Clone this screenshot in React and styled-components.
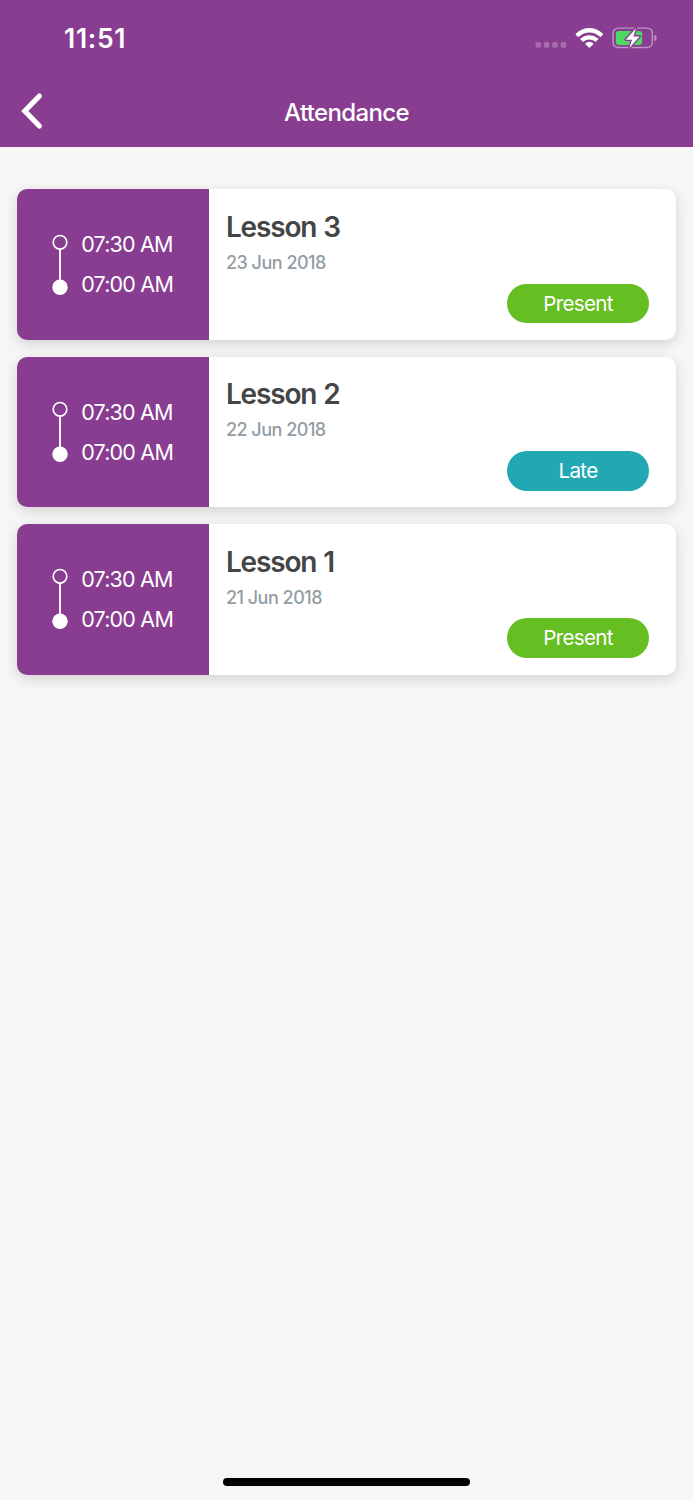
import React from "react";
import styled, { createGlobalStyle } from "styled-components";

const lessons = [
  { id: 3, title: "Lesson 3", date: "23 Jun 2018", start: "07:30 AM", end: "07:00 AM", status: "Present" },
  { id: 2, title: "Lesson 2", date: "22 Jun 2018", start: "07:30 AM", end: "07:00 AM", status: "Late" },
  { id: 1, title: "Lesson 1", date: "21 Jun 2018", start: "07:30 AM", end: "07:00 AM", status: "Present" },
];

const statusColors = {
  Present: "#65be22",
  Late: "#22a8b3",
};

function StatusIcons() {
  return (
    <svg width="124" height="26" viewBox="534 25 124 26" fill="none">
      <g fill="#fff" fillOpacity="0.25">
        <rect x="535.5" y="42" width="5.6" height="5.8" rx="1.8" />
        <rect x="543.8" y="42" width="5.6" height="5.8" rx="1.8" />
        <rect x="552.2" y="42" width="5.6" height="5.8" rx="1.8" />
        <rect x="560.6" y="42" width="5.6" height="5.8" rx="1.8" />
      </g>
      <g fill="#fff">
        <path d="M575.8 33.8 C583.4 26.1 595.3 26.1 602.9 33.8 Q603.3 34.3 602.9 34.7 L600.9 36.8 Q600.4 37.2 599.9 36.8 C593.9 31.1 584.8 31.1 578.8 36.8 Q578.3 37.2 577.8 36.8 L575.8 34.7 Q575.4 34.3 575.8 33.8Z" />
        <path d="M580.6 38.6 C585.4 34 593.3 34 598.1 38.6 Q598.6 39.1 598.1 39.5 L596 41.6 Q595.5 42 595 41.6 C591.9 38.9 586.8 38.9 583.7 41.6 Q583.2 42 582.7 41.6 L580.6 39.5 Q580.1 39.1 580.6 38.6Z" />
        <path d="M585.5 43.4 C587.7 41.5 591 41.5 593.2 43.4 Q593.7 43.8 593.2 44.3 L589.8 47.6 Q589.35 48 588.9 47.6 L585.5 44.3 Q585 43.8 585.5 43.4Z" />
      </g>
      <rect x="613.1" y="28.1" width="39.2" height="19.4" rx="5" stroke="#fff" strokeOpacity="0.45" strokeWidth="1.4" />
      <path d="M654.3 34.6 Q656.7 35.6 656.7 38 Q656.7 40.4 654.3 41.4Z" fill="#fff" fillOpacity="0.45" />
      <rect x="615.9" y="30.9" width="26.2" height="14" rx="2.8" fill="#4cd964" />
      <path
        d="M636 28.2 L625.7 39.7 H632 L629.4 47.9 L639.6 36.4 H633.4Z"
        fill="#fff"
        stroke="#883d90"
        strokeWidth="2.8"
        strokeLinejoin="round"
        paintOrder="stroke"
      />
    </svg>
  );
}

function BackIcon() {
  return (
    <svg width="24" height="38" viewBox="0 0 24 38" fill="none">
      <path d="M19.4 4 L4.8 19 L19.4 34" stroke="#fff" strokeWidth="5.2" strokeLinecap="round" />
    </svg>
  );
}

function Timeline() {
  return (
    <svg width="16" height="62" viewBox="0 0 16 62" fill="none">
      <circle cx="8" cy="8.3" r="6.8" stroke="#fff" strokeWidth="1.7" />
      <path d="M8 15 V46" stroke="#fff" strokeWidth="1.9" />
      <circle cx="8" cy="53.2" r="7.7" fill="#fff" />
    </svg>
  );
}

function LessonCard({ lesson }) {
  return (
    <Card>
      <TimePanel>
        <Timeline />
        <Times>
          <span>{lesson.start}</span>
          <span>{lesson.end}</span>
        </Times>
      </TimePanel>
      <Details>
        <LessonTitle>{lesson.title}</LessonTitle>
        <LessonDate>{lesson.date}</LessonDate>
        <Badge $color={statusColors[lesson.status]}>{lesson.status}</Badge>
      </Details>
    </Card>
  );
}

function App() {
  return (
    <>
      <GlobalStyle />
      <Screen>
        <Header>
          <StatusBar>
            <Clock>11:51</Clock>
            <StatusIcons />
          </StatusBar>
          <NavBar>
            <BackButton aria-label="Back">
              <BackIcon />
            </BackButton>
            <NavTitle>Attendance</NavTitle>
          </NavBar>
        </Header>
        <List>
          {lessons.map((lesson) => (
            <LessonCard key={lesson.id} lesson={lesson} />
          ))}
        </List>
        <HomeIndicator />
      </Screen>
    </>
  );
}

const GlobalStyle = createGlobalStyle`
  * {
    box-sizing: border-box;
  }

  body {
    margin: 0;
    background: #f6f6f6;
    font-family: Inter, "Liberation Sans", sans-serif;
  }
`;

const Screen = styled.div`
  display: flex;
  flex-direction: column;
  width: 693px;
  height: 1500px;
  background: #f6f6f6;
`;

const Header = styled.header`
  height: 147.4px;
  background: #883d90;
  color: #fff;
`;

const StatusBar = styled.div`
  display: flex;
  align-items: center;
  justify-content: space-between;
  height: 76px;
  padding: 0 35px 0 64px;
`;

const Clock = styled.span`
  font-size: 26.5px;
  font-weight: 600;
  line-height: 32px;
  letter-spacing: 0.7px;
`;

const NavBar = styled.div`
  display: grid;
  grid-template-columns: 60px 1fr 60px;
  align-items: center;
  height: 70px;
`;

const BackButton = styled.button`
  display: flex;
  margin: 0 0 0 20px;
  padding: 0;
  border: 0;
  background: none;
`;

const NavTitle = styled.h1`
  margin: 3px 0 0;
  font-size: 24px;
  font-weight: 500;
  line-height: 30px;
  letter-spacing: -0.65px;
  text-align: center;
`;

const List = styled.main`
  display: flex;
  flex: 1;
  flex-direction: column;
  gap: 16.8px;
  padding: 42px 17px 0;
`;

const Card = styled.article`
  display: flex;
  height: 150.6px;
  border-radius: 10px;
  background: #fff;
  box-shadow: 0 4px 13px rgba(0, 0, 0, 0.14);
`;

const TimePanel = styled.div`
  display: flex;
  align-items: center;
  gap: 13px;
  width: 192.3px;
  padding-left: 35.2px;
  border-radius: 10px 0 0 10px;
  background: #883d90;
  color: #fff;
`;

const Times = styled.div`
  display: flex;
  flex-direction: column;
  padding-top: 1.2px;
  font-size: 21.5px;
  line-height: 39.8px;
  letter-spacing: -0.8px;
  white-space: nowrap;
`;

const Details = styled.div`
  display: flex;
  flex: 1;
  flex-direction: column;
  padding: 20.6px 27px 16.8px 16.6px;
`;

const LessonTitle = styled.h2`
  margin: 0;
  color: #454545;
  font-size: 28px;
  font-weight: 600;
  line-height: 35px;
  letter-spacing: -1.15px;
  word-spacing: 1px;
`;

const LessonDate = styled.p`
  margin: 6px 0 0;
  color: #929da4;
  font-size: 18px;
  font-weight: 500;
  line-height: 24px;
  letter-spacing: -0.5px;
`;

const Badge = styled.span`
  align-self: flex-end;
  width: 142px;
  height: 39.5px;
  margin-top: auto;
  border-radius: 20px;
  background: ${(props) => props.$color};
  color: #fff;
  font-size: 20.7px;
  line-height: 40.4px;
  letter-spacing: -0.75px;
  text-align: center;
`;

const HomeIndicator = styled.div`
  align-self: center;
  width: 247.5px;
  height: 8.6px;
  margin-bottom: 13.6px;
  border-radius: 5px;
  background: #000;
`;

export default App;
